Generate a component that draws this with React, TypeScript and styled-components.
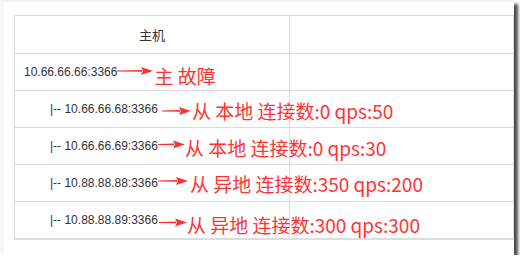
import React from 'react';
import styled, { createGlobalStyle } from 'styled-components';

const GlobalStyle = createGlobalStyle`
  html, body {
    margin: 0;
    padding: 0;
    background: #fff;
  }
`;

const Frame = styled.div`
  box-sizing: border-box;
  width: 514px;
  height: 255px;
  background: #fff;
  border-top: 2px solid #eef2f8;
  border-left: 4px solid #f8f8f8;
  padding: 13px 0 0 10px;
  box-shadow: 4px 4px 3px rgba(0, 0, 0, 0.7);
  overflow: hidden;
`;

const Table = styled.div`
  box-sizing: border-box;
  width: 500px;
  display: grid;
  grid-template-columns: 275px 1fr;
  border: 1px solid #dddddd;
  border-bottom-width: 2px;
`;

const Cell = styled.div<{ $head?: boolean; $last?: boolean }>`
  height: ${(p) => (p.$head ? 37 : 36)}px;
  border-bottom: ${(p) => (p.$last ? 0 : 1)}px solid #dddddd;
  border-right: 1px solid #dddddd;
  display: flex;
  align-items: center;
  white-space: nowrap;
  overflow: visible;
  position: relative;
  z-index: 1;
  &:nth-child(2n) {
    border-right: 0;
    z-index: 0;
  }
`;

const HeadCell = styled(Cell)`
  justify-content: center;
  font-family: 'Noto Sans CJK SC', 'Liberation Sans', sans-serif;
  font-size: 13px;
  color: #333;
`;

const Host = styled.span<{ $indent: number }>`
  margin-left: ${(p) => p.$indent}px;
  font-family: 'Liberation Sans', Arial, sans-serif;
  font-size: 12px;
  color: #333;
`;

const Note = styled.span<{ $gap: number; $dy: number }>`
  display: inline-flex;
  margin-left: ${(p) => p.$gap}px;
  transform: translateY(${(p) => p.$dy}px);
`;

const Label = styled.span<{ $gap: number; $dy: number }>`
  margin-left: ${(p) => p.$gap}px;
  transform: translateY(${(p) => p.$dy}px);
  font-family: 'Noto Sans CJK SC', 'Liberation Sans', sans-serif;
  font-size: 19px;
  line-height: 20px;
  color: #ff3333;
`;

function Arrow({ width }: { width: number }) {
  return (
    <svg width={width} height={10} viewBox={`0 0 ${width} 10`}>
      <polygon points={`0,4.6 ${width - 11},4 ${width - 11},5.8 0,5.4`} fill="#ff3030" />
      <polygon points={`${width - 12},1 ${width},5 ${width - 12},9 ${width - 10},5`} fill="#ff3030" />
    </svg>
  );
}

const rows = [
  { indent: 9, host: '10.66.66.66:3366', gap: 0, width: 36, arrowDy: -1, labelGap: 1, labelDy: 4, label: '主 故障' },
  { indent: 35, host: '|-- 10.66.66.68:3366', gap: 4, width: 29, arrowDy: 2, labelGap: 1, labelDy: 2, label: '从 本地 连接数:0 qps:50' },
  { indent: 35, host: '|-- 10.66.66.69:3366', gap: 0, width: 27, arrowDy: -1.5, labelGap: 0, labelDy: 1.5, label: '从 本地 连接数:0 qps:30' },
  { indent: 35, host: '|-- 10.88.88.88:3366', gap: 0, width: 30, arrowDy: -2, labelGap: 2, labelDy: 1, label: '从 异地 连接数:350 qps:200' },
  { indent: 35, host: '|-- 10.88.88.89:3366', gap: 1, width: 28, arrowDy: 2.5, labelGap: 0, labelDy: 5, label: '从 异地 连接数:300 qps:300' },
];

export default function App() {
  return (
    <>
      <GlobalStyle />
      <Frame>
        <Table>
          <HeadCell $head>主机</HeadCell>
          <Cell $head />
          {rows.map((r, i) => {
            const last = i === rows.length - 1;
            return (
              <React.Fragment key={r.host}>
                <Cell $last={last}>
                  <Host $indent={r.indent}>{r.host}</Host>
                  <Note $gap={r.gap} $dy={r.arrowDy}>
                    <Arrow width={r.width} />
                  </Note>
                  <Label $gap={r.labelGap} $dy={r.labelDy}>{r.label}</Label>
                </Cell>
                <Cell $last={last} />
              </React.Fragment>
            );
          })}
        </Table>
      </Frame>
    </>
  );
}
